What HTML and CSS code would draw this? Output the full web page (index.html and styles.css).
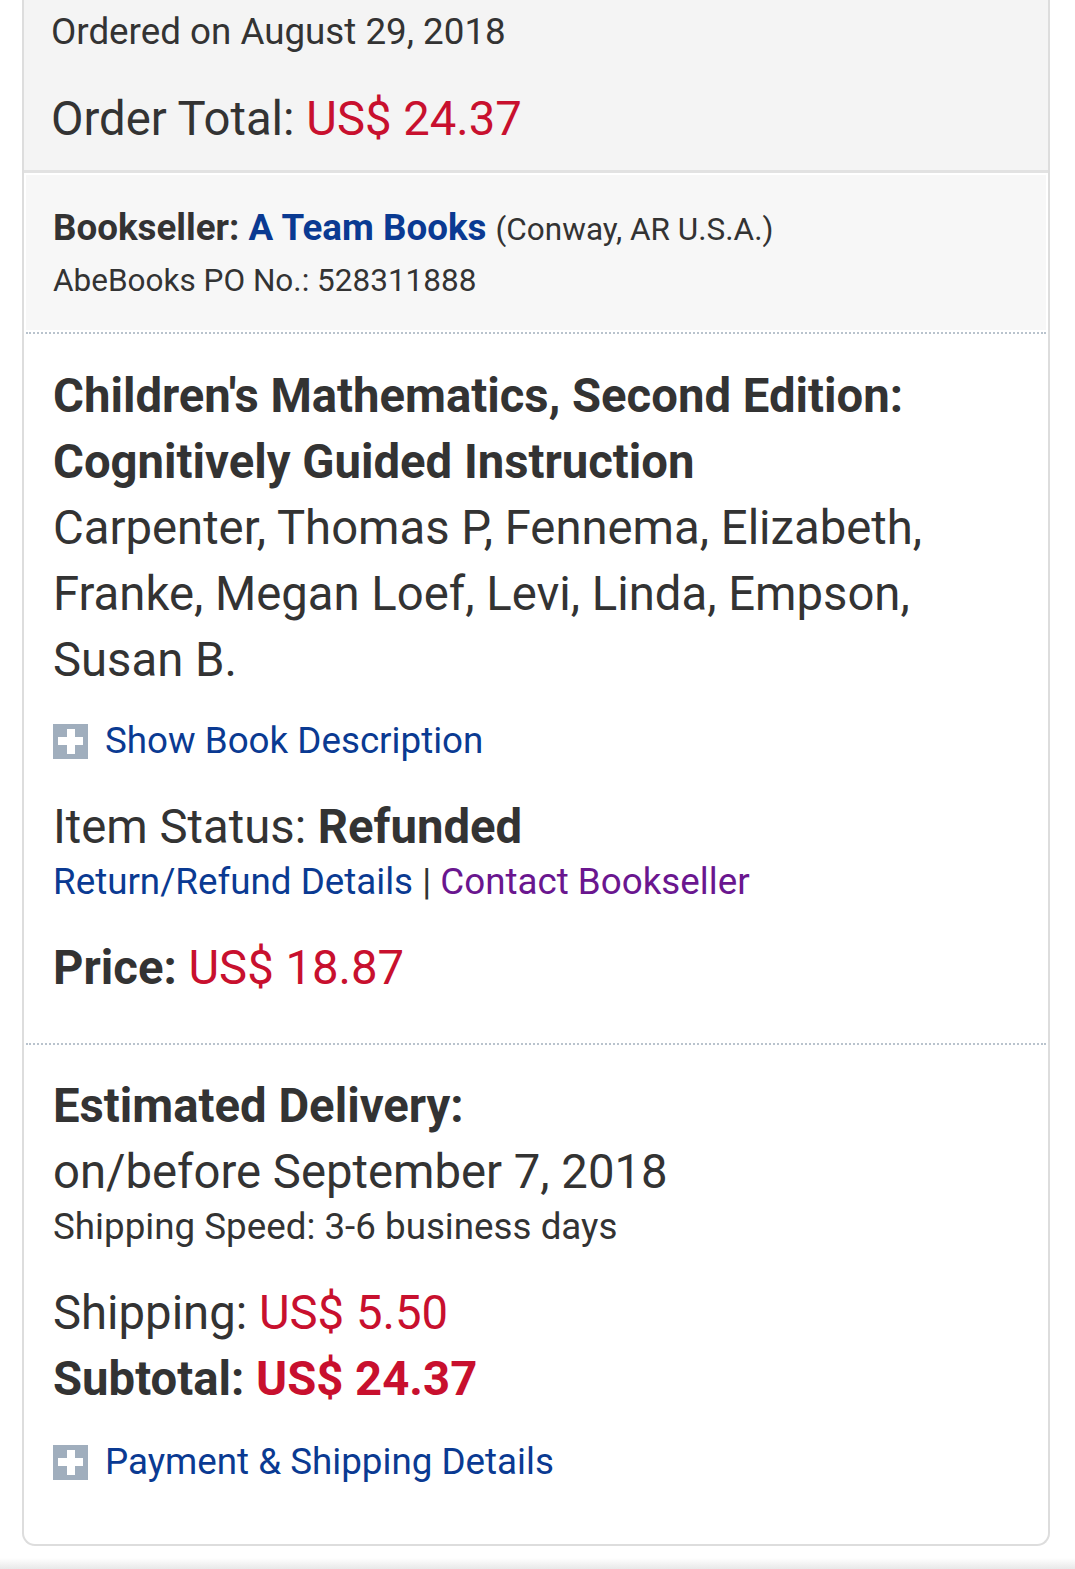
FILE: index.html
```html
<!DOCTYPE html>
<html lang="en">
  <head>
    <meta charset="UTF-8" />
    <meta name="viewport" content="width=device-width, initial-scale=1.0" />
    <title>Order Details | AbeBooks</title>
    <link rel="stylesheet" href="styles.css">
  </head>
  <body>
    <div class="card">
      <div class="summary">
        <p class="ordered">Ordered on August 29, 2018</p>
        <p class="total">Order Total: <span class="price">US$ 24.37</span></p>
      </div>
      <div class="seller">
        <p class="seller-name">
          <b>Bookseller:</b> <a class="link" href="#">A Team Books</a>
          <span class="small">(Conway, AR U.S.A.)</span>
        </p>
        <p class="small po">AbeBooks PO No.: 528311888</p>
      </div>
      <div class="item">
        <p class="title">Children's Mathematics, Second Edition: Cognitively Guided Instruction</p>
        <p class="authors">Carpenter, Thomas P, Fennema, Elizabeth, Franke, Megan Loef, Levi, Linda, Empson, Susan B.</p>
        <a class="toggle" href="#"><span class="plus"></span>Show Book Description</a>
        <p class="status">Item Status: <b>Refunded</b></p>
        <p class="actions">
          <a class="link" href="#">Return/Refund Details</a> | <a class="visited" href="#">Contact Bookseller</a>
        </p>
        <p class="line-price"><b>Price:</b> <span class="price">US$ 18.87</span></p>
      </div>
      <div class="delivery">
        <p class="big"><b>Estimated Delivery:</b></p>
        <p class="big">on/before September 7, 2018</p>
        <p class="speed">Shipping Speed: 3-6 business days</p>
        <p class="big shipping">Shipping: <span class="price">US$ 5.50</span></p>
        <p class="big"><b>Subtotal:</b> <b class="price">US$ 24.37</b></p>
        <a class="toggle" href="#"><span class="plus"></span>Payment &amp; Shipping Details</a>
      </div>
    </div>
    <div class="next"></div>
  </body>
</html>
```

FILE: styles.css
```css
body {
  margin: 0;
  background-color: white;
  color: #333;
  font-family: Roboto, "Noto Sans", sans-serif;
  font-size: 36.75px;
}
p {
  margin: 0;
}
a {
  text-decoration: none;
}
.card {
  margin: 0 25px 0 22px;
  border: 2px solid #ddd;
  border-top: 0;
  border-radius: 0 0 13px 13px;
  padding-bottom: 26px;
}
.summary {
  background-color: #f4f4f4;
  border-bottom: 3px solid #e2e2e2;
  padding: 10px 27px 18px;
}
.ordered {
  line-height: 44px;
}
.total {
  font-size: 47.25px;
  line-height: 66px;
  margin-top: 32px;
}
.price {
  color: #c8102e;
}
.seller {
  margin: 2px 2px 0;
  background-color: #f7f7f7;
  padding: 28px 27px 31px;
}
.seller-name {
  line-height: 50px;
}
.po {
  margin-top: 7px;
}
.small {
  font-size: 31.5px;
}
.link {
  color: #0a3a92;
}
.seller-name .link {
  font-weight: bold;
}
.visited {
  color: #6a168f;
}
.item,
.delivery {
  margin: 2px 2px 0;
  border-top: 2px dotted #b9c3cd;
  padding: 29px 27px 40px;
}
.title,
.authors,
.big {
  font-size: 47.25px;
  line-height: 66px;
}
.title {
  font-weight: bold;
}
.toggle {
  display: flex;
  align-items: center;
  color: #0a3a92;
  margin-top: 26px;
  line-height: 44px;
}
.plus {
  width: 35px;
  height: 35px;
  margin-right: 17px;
  background:
    linear-gradient(white, white) center / 8px 25px no-repeat,
    linear-gradient(white, white) center / 25px 8px no-repeat,
    #a0aebd;
}
.status {
  font-size: 47.25px;
  line-height: 60px;
  margin-top: 34px;
}
.actions {
  line-height: 50px;
}
.line-price {
  font-size: 47.25px;
  line-height: 66px;
  margin-top: 28px;
}
.delivery {
  padding-top: 28px;
  padding-bottom: 34px;
}
.speed {
  line-height: 44px;
}
.shipping {
  margin-top: 31px;
}
.delivery .toggle {
  margin-top: 28px;
}
.next {
  height: 14px;
  margin-top: 12px;
  background: linear-gradient(#fff, #e2e2e2);
}
```
